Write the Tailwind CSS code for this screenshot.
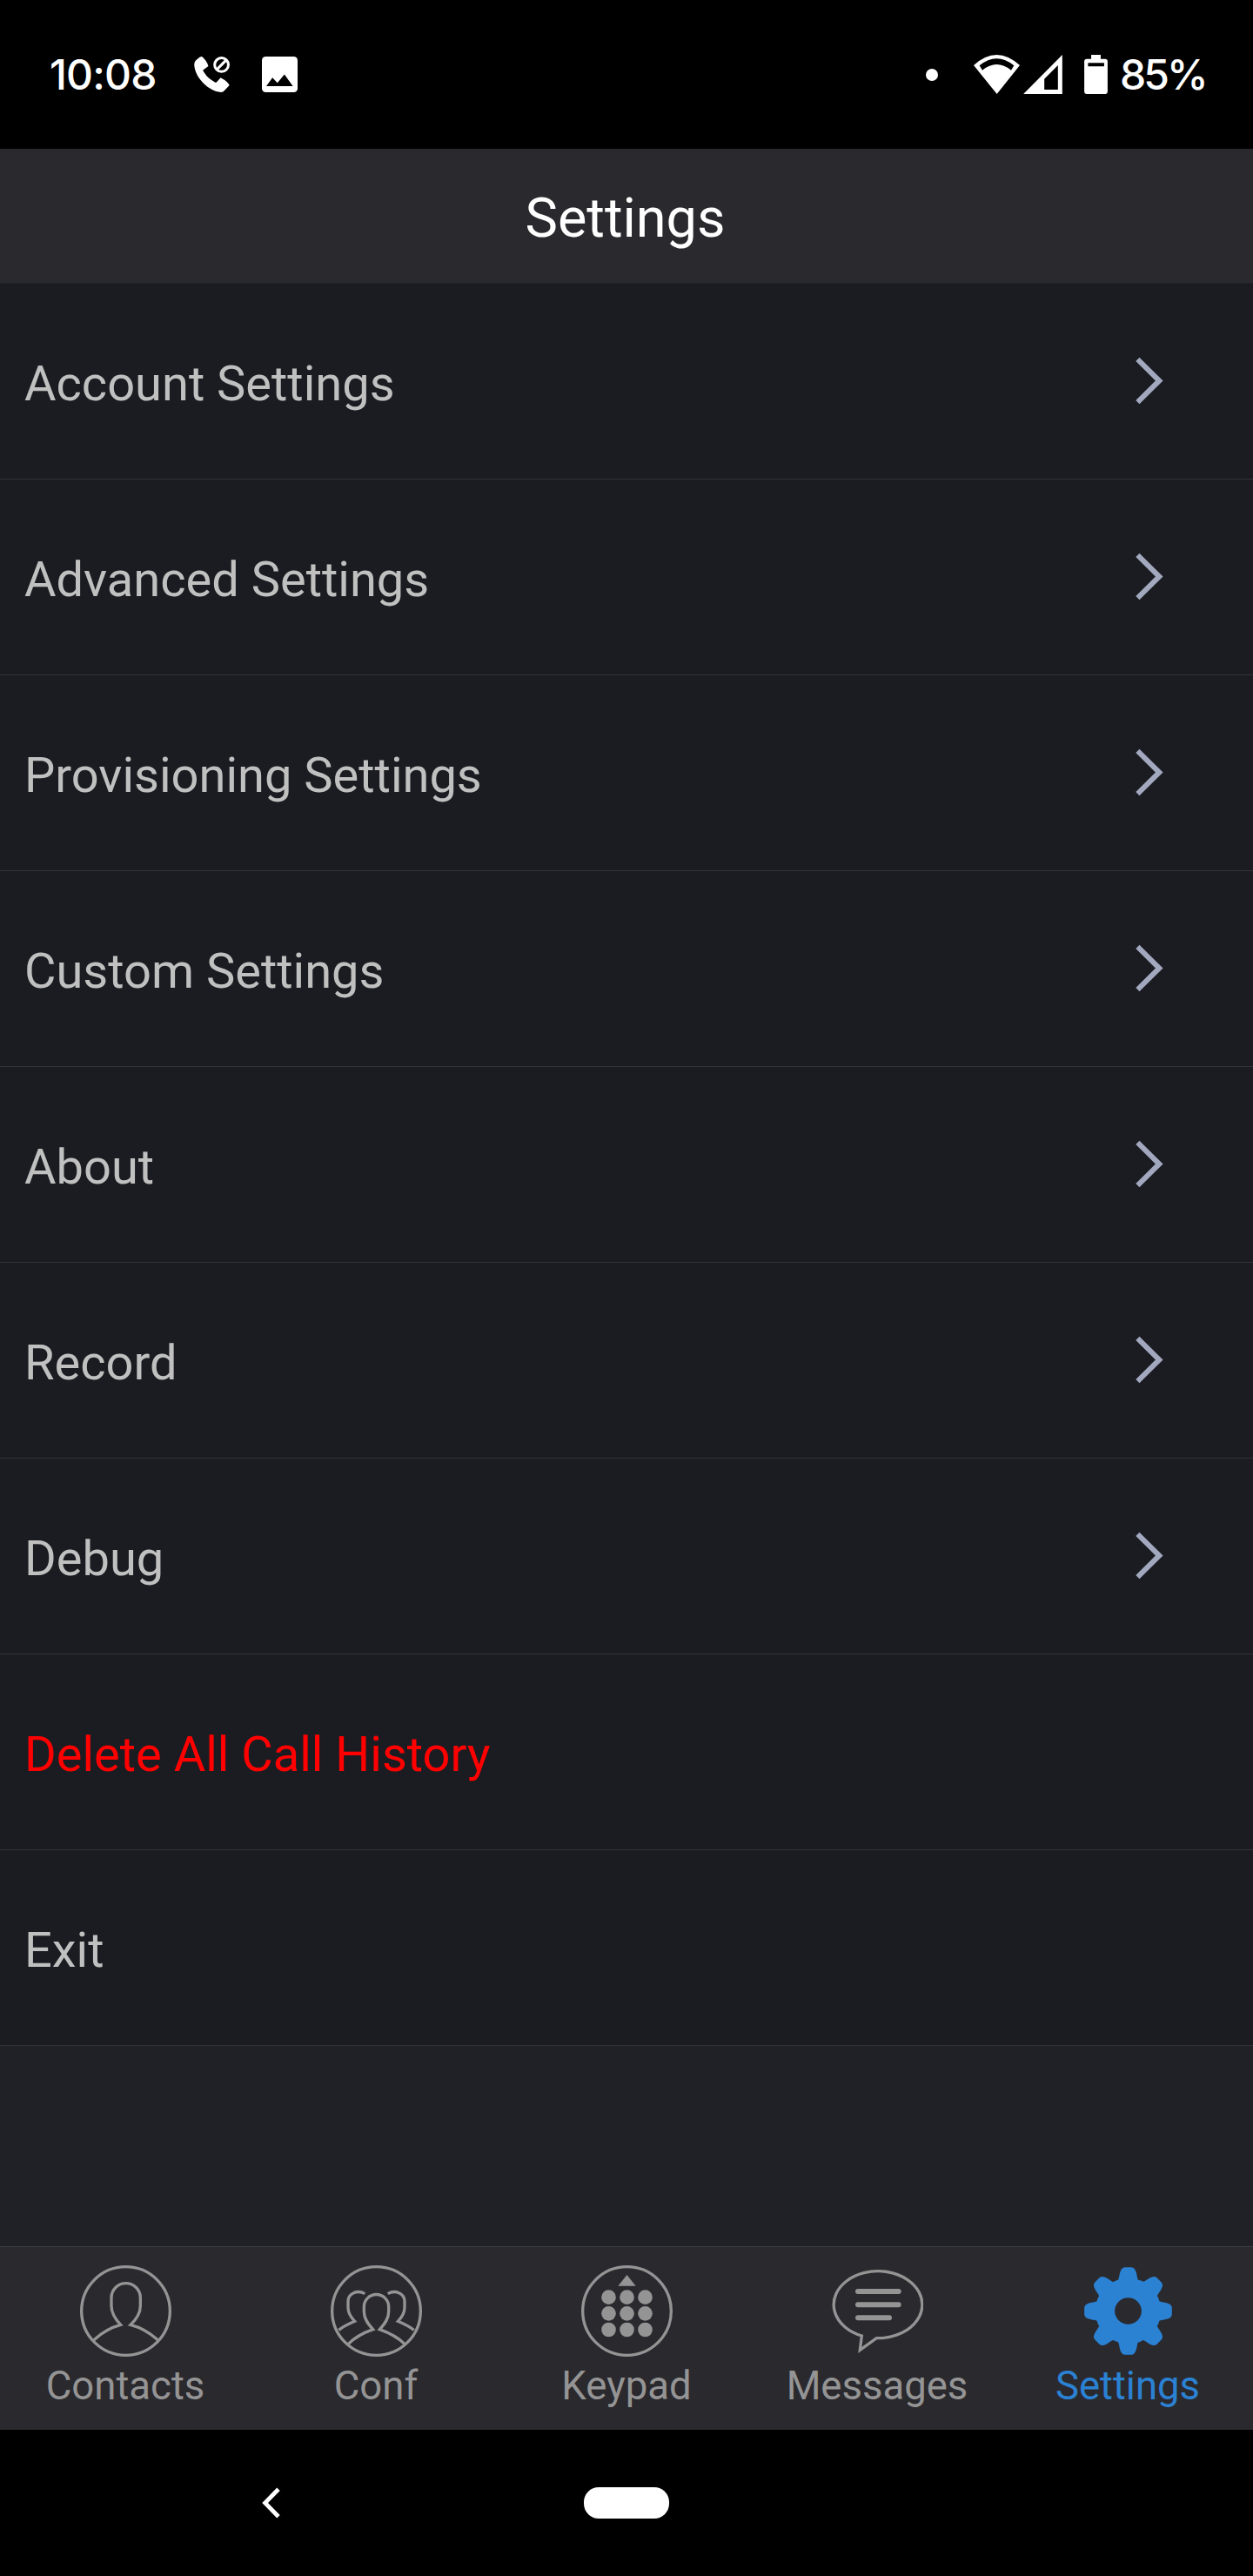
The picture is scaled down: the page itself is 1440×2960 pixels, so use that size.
<!DOCTYPE html>
<html lang="en">
<head>
  <meta charset="UTF-8">
  <meta name="viewport" content="width=device-width, initial-scale=1.0">
  <script src="https://cdn.jsdelivr.net/npm/@tailwindcss/browser@4"></script>
  <title>Settings</title>
</head>
<body class="bg-black">
<div class="w-[1440px] h-[2960px] flex flex-col bg-[#202126] font-['Roboto',sans-serif] overflow-hidden">

  <!-- Status bar -->
  <div class="h-[171px] shrink-0 bg-black text-white flex items-center justify-between pl-[57px] pr-[56px] font-['Inter',sans-serif] font-medium text-[48px]">
    <div class="flex items-center">
      <span class="w-[166px] whitespace-nowrap tracking-[-0.8px]">10:08</span>
      <svg class="w-[41px] h-[41px]" viewBox="0 0 122 122" fill="white">
        <path d="M5 14Q0 20 1 32C6 75 50 118 92 122Q100 122 104 116L121 98Q114 84 91 72L77 88Q75 90 70 87C52 76 42 68 30 47L49 33Q44 14 27 0Q22 0 18 3Z"/>
        <circle cx="94" cy="28" r="23.5" fill="none" stroke="white" stroke-width="9"/>
        <path d="M79 43L109 13" stroke="white" stroke-width="9"/>
      </svg>
      <svg class="w-[41px] h-[41px] ml-[37px]" viewBox="0 0 122 122" fill="white">
        <rect width="122" height="122" rx="13"/>
        <path d="M15 101L36 72L53 90L77 61L106 101Z" fill="black"/>
      </svg>
    </div>
    <div class="flex items-center">
      <div class="w-[14px] h-[14px] rounded-full bg-white"></div>
      <svg class="w-[53px] h-[45px] ml-[41px]" viewBox="0 0 159 135" fill="white">
        <path d="M0 36Q79 -36 159 36L80 135Z"/>
        <path d="M20 37Q79 -11 139 37L129 53Q79 13 30 53Z" fill="black"/>
      </svg>
      <svg class="w-[45px] h-[45px] ml-[4px]" viewBox="0 0 134 135" fill="white">
        <path d="M0 135L134 0V135Z"/>
        <path d="M72 83L119 36V120H72Z" fill="black"/>
      </svg>
      <svg class="w-[27px] h-[45px] ml-[25px]" viewBox="0 0 81 136" fill="white">
        <path d="M24 0H57V20H24Z"/>
        <rect y="14" width="81" height="122" rx="9"/>
        <path d="M13 28H69V40H13Z" fill="black"/>
      </svg>
      <span class="w-[97px] ml-[14px] whitespace-nowrap tracking-[-3px]">85%</span>
    </div>
  </div>

  <!-- Header -->
  <div class="h-[154px] shrink-0 bg-[#2a292e] flex items-center justify-center pt-[5px] pr-[3px] text-[63px] leading-[95px] text-white">Settings</div>

  <!-- Settings list -->
  <div id="list" class="mt-px flex-1"></div>

  <!-- Tab bar -->
  <div class="h-[211px] shrink-0 bg-[#2a292e] border-t border-[#3d3d41] pt-[21px] grid grid-cols-5 text-[#949494] text-[45.5px] leading-[55px]">
    <div class="flex flex-col items-center gap-1.5">
      <svg class="w-[105px] h-[105px]" viewBox="0 0 315 315" fill="none" stroke="currentColor" stroke-width="10">
        <circle cx="157.5" cy="157.5" r="152.5"/>
        <path d="M48 257C75 232 110 213 140 205C122 186 108 165 108 140V112A50 50 0 0 1 208 112V140C208 165 194 186 174 205C205 213 240 232 268 257"/>
      </svg>
      <span>Contacts</span>
    </div>
    <div class="flex flex-col items-center gap-1.5">
      <svg class="w-[105px] h-[105px]" viewBox="0 0 315 315" fill="none" stroke="currentColor" stroke-width="10">
        <circle cx="157.5" cy="157.5" r="152.5"/>
        <path d="M61 271C85 247 115 232 146 221C128 202 115 185 115 160V143A42.5 42.5 0 0 1 200 143V160C200 185 187 202 169 221C200 232 230 247 255 271"/>
        <path d="M118 98C92 83 60 97 60 125V145C60 165 70 180 83 193C62 202 45 210 28 223"/>
        <path d="M197 98C223 83 255 97 255 125V145C255 165 245 180 232 193C253 202 270 210 287 223"/>
      </svg>
      <span>Conf</span>
    </div>
    <div class="flex flex-col items-center gap-1.5">
      <svg class="w-[105px] h-[105px]" viewBox="0 0 315 315" fill="currentColor">
        <circle cx="157.5" cy="157.5" r="152.5" fill="none" stroke="currentColor" stroke-width="10"/>
        <path d="M157.5 33L188 71H127Z"/>
        <circle cx="94.5" cy="110" r="25"/><circle cx="157.5" cy="110" r="25"/><circle cx="220.5" cy="110" r="25"/>
        <circle cx="94.5" cy="166" r="25"/><circle cx="157.5" cy="166" r="25"/><circle cx="220.5" cy="166" r="25"/>
        <circle cx="94.5" cy="222" r="25"/><circle cx="157.5" cy="222" r="25"/><circle cx="220.5" cy="222" r="25"/>
      </svg>
      <span>Keypad</span>
    </div>
    <div class="flex flex-col items-center gap-1.5">
      <svg class="w-[105px] h-[105px]" viewBox="0 0 315 315" fill="none" stroke="currentColor" stroke-width="10">
        <path d="M103 243A152.5 115.5 0 1 1 154 251L97 292Z"/>
        <path d="M90 90H230M90 136H230M90 181H198" stroke-width="18" stroke-linecap="round"/>
      </svg>
      <span>Messages</span>
    </div>
    <div class="flex flex-col items-center gap-1.5 text-[#2b81d2]">
      <svg class="w-[105px] h-[105px]" viewBox="-157.5 -157.5 315 315" fill="currentColor">
        <defs>
          <path id="tooth" d="M-34 -108C-31 -116 -30 -126 -28 -133Q-23 -151 -11 -151H11Q23 -151 28 -133C30 -126 31 -116 34 -108L20 -80H-20Z"/>
        </defs>
        <circle r="79.5" fill="none" stroke="currentColor" stroke-width="67"/>
        <use href="#tooth"/>
        <use href="#tooth" transform="rotate(45)"/>
        <use href="#tooth" transform="rotate(90)"/>
        <use href="#tooth" transform="rotate(135)"/>
        <use href="#tooth" transform="rotate(180)"/>
        <use href="#tooth" transform="rotate(225)"/>
        <use href="#tooth" transform="rotate(270)"/>
        <use href="#tooth" transform="rotate(315)"/>
      </svg>
      <span>Settings</span>
    </div>
  </div>

  <!-- System navigation -->
  <div class="h-[168px] shrink-0 bg-black flex items-center pl-[301px]">
    <svg class="w-[22px] h-[36px]" viewBox="0 0 22 36" fill="none" stroke="white" stroke-width="4.8">
      <path d="M19 2.2L3.6 18L19 33.8"/>
    </svg>
    <div class="w-[98px] h-[36px] ml-[348px] rounded-[17px] bg-white"></div>
  </div>
</div>

<script>
  const items = [
    { label: "Account Settings", arrow: true },
    { label: "Advanced Settings", arrow: true },
    { label: "Provisioning Settings", arrow: true },
    { label: "Custom Settings", arrow: true },
    { label: "About", arrow: true },
    { label: "Record", arrow: true },
    { label: "Debug", arrow: true },
    { label: "Delete All Call History", color: "text-[#ff0000]" },
    { label: "Exit" }
  ];

  const chevron = `<svg class="w-[36px] h-[60px]" viewBox="0 0 36 60" fill="none" stroke="#a2a9bf" stroke-width="6">
                     <path d="M3.4 4.8L28.3 29.5L3.4 54.2"/>
                   </svg>`;

  document.getElementById("list").innerHTML = items.map(item => `
    <div class="h-[225px] bg-[#1b1c21] border-b border-[#323237] flex items-center justify-between pl-7 pr-[100px]">
      <span class="pt-[6px] text-[56px] leading-[84px] ${item.color || "text-[#c0c0c0]"}">${item.label}</span>
      ${item.arrow ? chevron : ""}
    </div>`).join("");
</script>
</body>
</html>
